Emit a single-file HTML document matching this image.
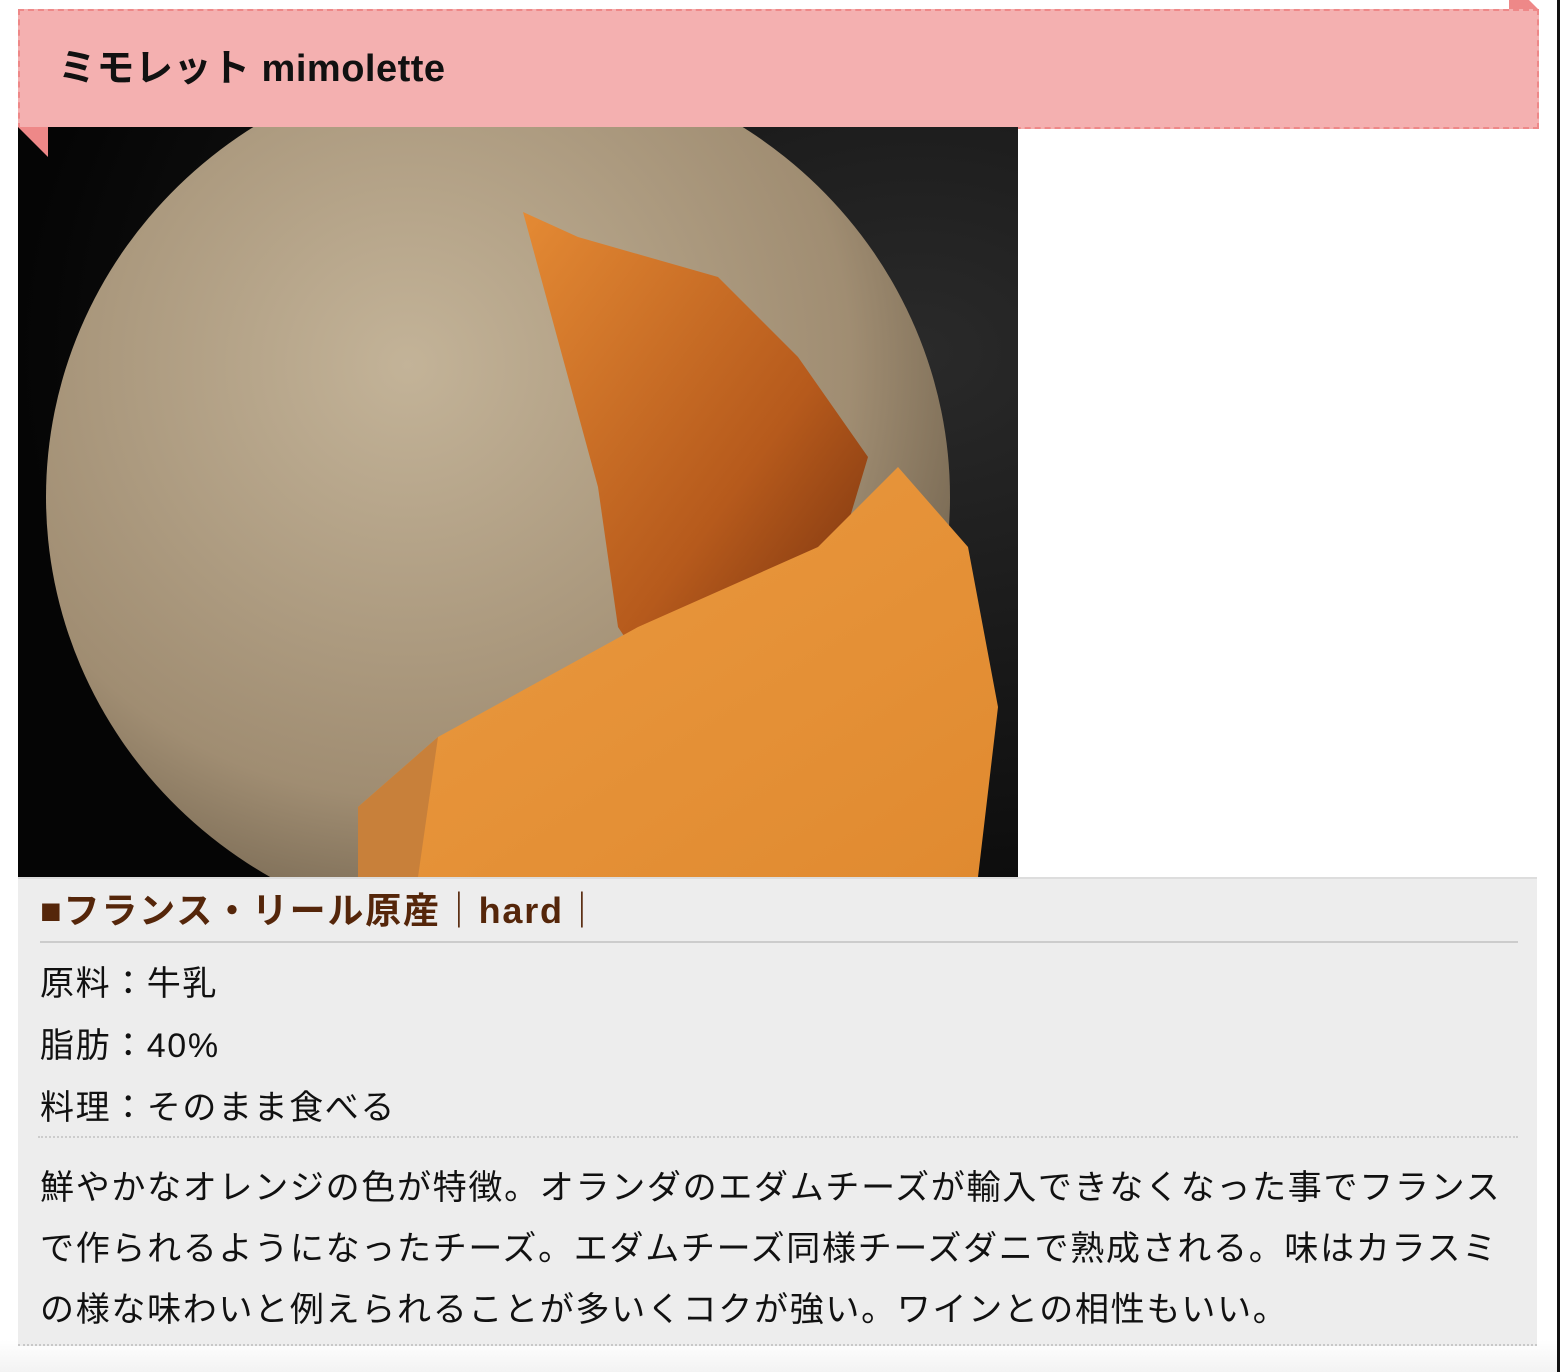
<!DOCTYPE html>
<html><head><meta charset="utf-8"><style>
body{margin:0;width:1560px;height:1372px;background:linear-gradient(#fff 1340px,#f3f3f3 1372px);position:relative;overflow:hidden;font-family:"Liberation Sans","Noto Sans CJK JP",sans-serif;}
.hd{position:absolute;left:18px;top:9px;width:1517px;height:116px;background:#f4b0b0;border:2px dashed #ee8888;}
.hd h1{margin:0;position:absolute;left:38px;top:36px;font-size:38px;line-height:44px;font-weight:bold;color:#111;letter-spacing:0.5px}
.tri{position:absolute;left:18px;top:127px;width:0;height:0;border-top:30px solid #ee8888;border-left:30px solid transparent;z-index:3}
.tab{position:absolute;left:1509px;top:0;width:20px;height:9px;background:#ee8888;}
.tab2{position:absolute;left:1529px;top:0;width:0;height:0;border-left:9px solid #ee8888;border-top:9px solid transparent;}
.img{position:absolute;left:18px;top:127px;width:1000px;height:750px;}
.info{position:absolute;left:18px;top:877px;width:1519px;height:465px;background:#ededed;border-top:2px solid #ddd;border-bottom:2px dotted #c8c8c8;}
.h2{position:absolute;left:22px;top:8px;width:1478px;font-size:36px;font-weight:bold;color:#55260a;height:54px;border-bottom:2px solid #ccc;line-height:48px;letter-spacing:1.8px}
.rows{position:absolute;left:22px;top:74px;font-size:34px;color:#111;line-height:62px;letter-spacing:1.6px}
.sep{position:absolute;left:20px;top:257px;width:1480px;border-top:2px dotted #ccc;}
.body{position:absolute;left:22px;top:279px;width:1480px;font-size:34px;color:#111;line-height:61px;letter-spacing:1.7px}
.edge{position:absolute;left:1557px;top:0;width:3px;height:1372px;background:#111;}
</style></head><body>
<div class="tab"></div><div class="tab2"></div>
<div class="hd"><h1>ミモレット mimolette</h1></div>
<svg class="img" viewBox="0 0 1000 750">
<defs>
<radialGradient id="bg" cx="0.9" cy="0.3" r="0.9"><stop offset="0" stop-color="#2a2a2a"/><stop offset="1" stop-color="#050505"/></radialGradient>
<radialGradient id="ball" cx="0.4" cy="0.35" r="0.7"><stop offset="0" stop-color="#c3b398"/><stop offset="0.7" stop-color="#a08d72"/><stop offset="1" stop-color="#6a5c48"/></radialGradient>
<linearGradient id="cut" x1="0" y1="0" x2="1" y2="1"><stop offset="0" stop-color="#e48a34"/><stop offset="0.6" stop-color="#b65a1c"/><stop offset="1" stop-color="#6e2c0c"/></linearGradient>
<linearGradient id="wedge" x1="0" y1="0" x2="1" y2="1"><stop offset="0" stop-color="#eb9a40"/><stop offset="1" stop-color="#e08a30"/></linearGradient>
</defs>
<rect width="1000" height="750" fill="url(#bg)"/>
<ellipse cx="480" cy="370" rx="452" ry="440" fill="url(#ball)"/>
<path d="M505 85 L560 110 L700 150 L780 230 L850 330 L820 430 L640 560 L600 500 L580 360 Z" fill="url(#cut)"/>
<path d="M340 680 L420 610 L620 500 L800 420 L880 340 L950 420 L980 580 L960 750 L340 750 Z" fill="url(#wedge)"/>
<path d="M340 680 L420 610 L400 750 L340 750 Z" fill="#c8803a"/>
</svg>
<div class="tri"></div>
<div class="info">
<div class="h2">■フランス・リール原産｜hard｜</div>
<div class="rows">原料：牛乳<br>脂肪：40%<br>料理：そのまま食べる</div>
<div class="sep"></div>
<div class="body">鮮やかなオレンジの色が特徴。オランダのエダムチーズが輸入できなくなった事でフランスで作られるようになったチーズ。エダムチーズ同様チーズダニで熟成される。味はカラスミの様な味わいと例えられることが多いくコクが強い。ワインとの相性もいい。</div>
</div>
<div class="edge"></div>
</body></html>
